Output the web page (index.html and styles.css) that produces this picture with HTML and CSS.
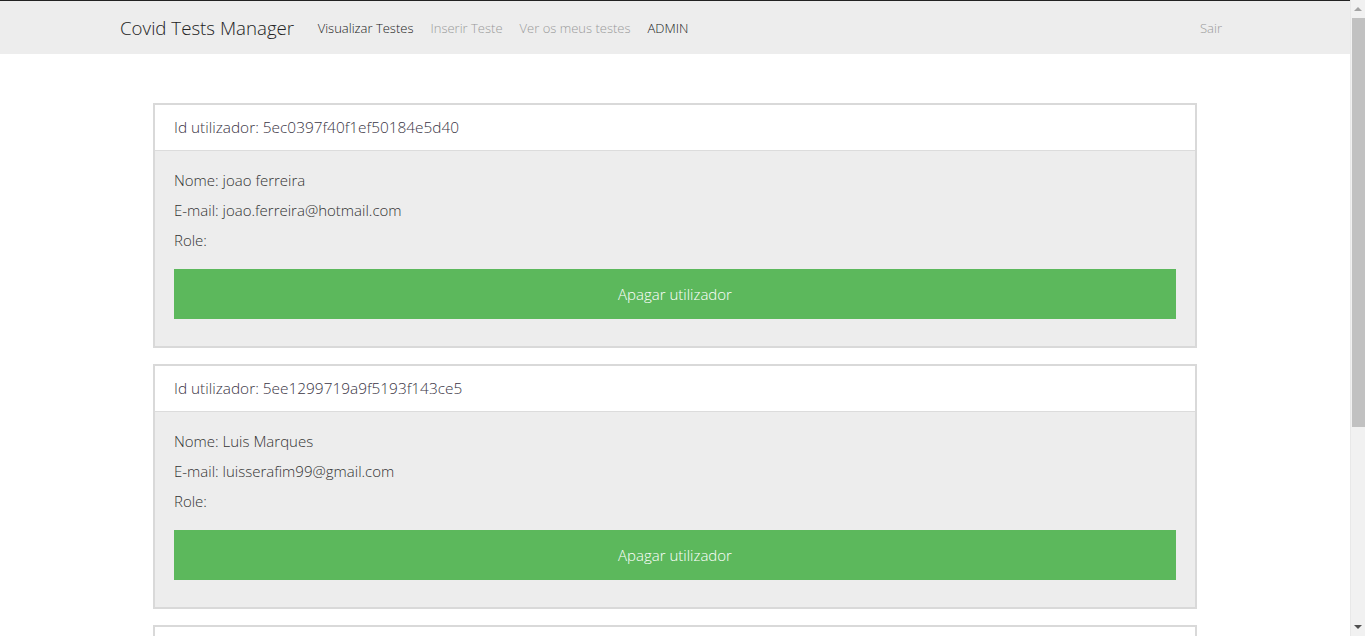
FILE: index.html
```html
<!DOCTYPE html>
<html lang="pt">
<head>
<meta charset="utf-8">
<title>Covid Tests Manager</title>
<link rel="stylesheet" href="styles.css">
</head>
<body>
<div class="page">
  <nav class="navbar">
    <div class="container nav-inner">
      <a class="brand" href="#">Covid Tests Manager</a>
      <ul class="nav-links">
        <li><a class="nav-link active" href="#">Visualizar Testes</a></li>
        <li><a class="nav-link" href="#">Inserir Teste</a></li>
        <li><a class="nav-link" href="#">Ver os meus testes</a></li>
        <li><a class="nav-link active" href="#">ADMIN</a></li>
      </ul>
      <a class="nav-link logout" href="#">Sair</a>
    </div>
  </nav>
  <main class="users">
    <section class="card">
      <header class="card-header">Id utilizador: 5ec0397f40f1ef50184e5d40</header>
      <div class="card-body">
        <p>Nome: joao ferreira</p>
        <p>E-mail: joao.ferreira@hotmail.com</p>
        <p>Role:</p>
        <button class="btn-delete" type="button">Apagar utilizador</button>
      </div>
    </section>
    <section class="card">
      <header class="card-header">Id utilizador: 5ee1299719a9f5193f143ce5</header>
      <div class="card-body">
        <p>Nome: Luis Marques</p>
        <p>E-mail: luisserafim99@gmail.com</p>
        <p>Role:</p>
        <button class="btn-delete" type="button">Apagar utilizador</button>
      </div>
    </section>
    <section class="card">
      <header class="card-header">Id utilizador: 5ee12b4f19a9f5193f143ce6</header>
      <div class="card-body">
        <p>Nome: admin</p>
        <p>E-mail: admin@admin.com</p>
        <p>Role: admin</p>
        <button class="btn-delete" type="button">Apagar utilizador</button>
      </div>
    </section>
  </main>
</div>
<div class="scrollbar" aria-hidden="true">
  <div class="sb-up"></div>
  <div class="sb-thumb"></div>
  <div class="sb-down"></div>
</div>
</body>
</html>
```
FILE: styles.css
```css
html, body {
  margin: 0;
  padding: 0;
  height: 100%;
  overflow: hidden;
  background: #fff;
}
body {
  font-family: "Open Sans", "Liberation Sans", sans-serif;
  font-weight: 300;
  color: #333;
}
.page {
  width: calc(100% - 15px);
  border-top: 1px solid #222;
}
.container {
  width: 1170px;
  margin: 0 auto;
  padding: 0 15px;
  box-sizing: border-box;
}
.navbar {
  background: #ededed;
  height: 53px;
}
.nav-inner {
  display: flex;
  align-items: center;
  height: 100%;
}
a { text-decoration: none; }
.brand {
  font-size: 18.7px;
  font-weight: 300;
  color: #222;
  padding: 0 15px;
  margin-right: 0;
}
.nav-links {
  display: flex;
  list-style: none;
  margin: 0;
  padding: 0;
  flex: 1;
}
.nav-link {
  display: block;
  font-size: 13px;
  padding: 8px 8.5px;
  color: #9a9a9a;
  font-weight: 300;
}
.nav-link.active {
  color: #222;
}
.logout {
  padding-right: 23px;
}
.users {
  width: 1044px;
  margin: 49px auto 0;
}
.card {
  border: 2px solid #d9d9d9;
  margin-bottom: 16px;
  background: #ededed;
}
.card-header {
  background: #fff;
  border-bottom: 1px solid #dcdcdc;
  height: 46px;
  box-sizing: border-box;
  padding: 0 19px;
  display: flex;
  align-items: center;
  font-size: 15.4px;
  color: #3a3545;
}
.card-body {
  padding: 14px 19px 27px;
  font-size: 15px;
}
.card-body p {
  margin: 0;
  line-height: 30px;
}
.btn-delete {
  display: block;
  width: 100%;
  height: 50px;
  margin-top: 14px;
  border: none;
  background: #5cb85c;
  color: #fff;
  font-family: "Open Sans", "Liberation Sans", sans-serif;
  font-weight: 300;
  font-size: 15px;
}
.scrollbar {
  position: fixed;
  top: 0;
  right: 0;
  width: 15px;
  height: 100%;
  background: #f1f1f1;
  border-left: 1px solid #e8e8e8;
  box-sizing: border-box;
}
.sb-up, .sb-down {
  position: absolute;
  left: 3px;
  width: 0;
  height: 0;
  border-left: 4px solid transparent;
  border-right: 4px solid transparent;
}
.sb-up {
  top: 7px;
  border-bottom: 4px solid #a3a3a3;
}
.sb-down {
  bottom: 7px;
  border-top: 4px solid #505050;
}
.sb-thumb {
  position: absolute;
  top: 18px;
  left: 1px;
  width: 13px;
  height: 409px;
  background: #c1c1c1;
}
```
